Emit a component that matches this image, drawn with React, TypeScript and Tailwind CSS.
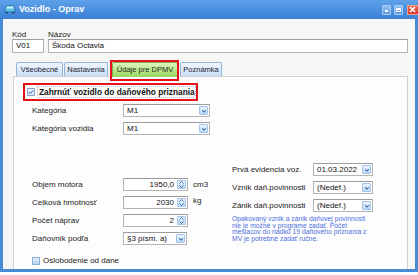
import React from 'react'

const font = "font-['Liberation_Sans',Arial,sans-serif]"

function Chevron() {
  return (
    <svg viewBox="0 0 8 8" className="w-[6px] h-[6px]">
      <path d="M1.5 3 L4 5.5 L6.5 3" fill="none" stroke="#2d5f9e" strokeWidth="1.4" />
    </svg>
  )
}

function DropBtn() {
  return (
    <span className="absolute right-px top-px bottom-px w-[9px] flex items-center justify-center rounded-[1px] border border-[#a3c4ea] bg-gradient-to-b from-[#eef5fe] to-[#bcd8f7]">
      <Chevron />
    </span>
  )
}

function Combo({ value, className }: { value: string; className: string }) {
  return (
    <div className={`relative h-[13px] ${className} bg-white border border-[#b4b4b4] border-t-[#9c9c9c] flex items-center pl-[3px] text-[8px] text-[#111]`}>
      {value}
      <DropBtn />
    </div>
  )
}

function Spin({ value }: { value: string }) {
  return (
    <div className="relative h-[13px] w-[65px] bg-white border border-[#b4b4b4] border-t-[#9c9c9c] flex items-center justify-end pr-[13px] text-[8px] text-[#111]">
      {value}
      <span className="absolute right-px top-px bottom-px w-[9px] flex flex-col items-center justify-center gap-[1px] rounded-[1px] border border-[#a3c4ea] bg-gradient-to-b from-[#eef5fe] to-[#bcd8f7]">
        <svg viewBox="0 0 6 3" className="w-[5px] h-[3px]">
          <path d="M0.5 2.8 L3 0.3 L5.5 2.8" fill="none" stroke="#2d5f9e" strokeWidth="1" />
        </svg>
        <svg viewBox="0 0 6 3" className="w-[5px] h-[3px]">
          <path d="M0.5 0.2 L3 2.7 L5.5 0.2" fill="none" stroke="#2d5f9e" strokeWidth="1" />
        </svg>
      </span>
    </div>
  )
}

function Row({ label, lw, children }: { label: string; lw: string; children: React.ReactNode }) {
  return (
    <div className="flex items-center h-[13px] text-[8px] text-[#222]">
      <span className={`${lw} shrink-0 whitespace-nowrap`}>{label}</span>
      {children}
    </div>
  )
}

const tabs = [
  { label: 'Všeobecné', cls: 'w-[47px]' },
  { label: 'Nastavenia', cls: 'w-[44px] ml-[1px]' },
  { label: 'Údaje pre DPMV', cls: 'w-[66px] ml-[4px]', active: true },
  { label: 'Poznámka', cls: 'w-[42px] ml-[2px]' },
]

export default function App() {
  return (
    <div className={`w-[418px] h-[275px] bg-white overflow-hidden ${font}`}>
      <div className="h-[272px] flex flex-col bg-[#4a8bd7] px-[3px] pb-[3px]">
        {/* title bar */}
        <div className="-mx-[3px] h-[19px] shrink-0 flex items-center bg-gradient-to-b from-[#5ea1ea] to-[#3b80d6] pl-[4px]">
          <svg viewBox="0 0 12 9" className="w-[12px] h-[9px]">
            <path d="M1 4 L2.5 1.2 Q2.8 0.6 3.5 0.6 L8.5 0.6 Q9.2 0.6 9.5 1.2 L11 4 L11 7 L1 7 Z" fill="#5cc3e6" stroke="#1f6a9c" strokeWidth="0.8" />
            <path d="M3 1.6 L9 1.6 L10 3.6 L2 3.6 Z" fill="#c9f0fb" />
            <rect x="1.6" y="6.6" width="2.2" height="2" fill="#1f4d70" />
            <rect x="8.2" y="6.6" width="2.2" height="2" fill="#1f4d70" />
          </svg>
          <span className="ml-[3px] text-[9px] font-bold text-white">Vozidlo - Oprav</span>
          <div className="ml-auto flex items-center h-[10px]">
            <span className="w-[9px] h-[10px] rounded-[1px] border border-[#a9cdf4] bg-gradient-to-b from-[#8fc0f2] to-[#5b9ae3] flex items-end justify-center pb-[2px]">
              <span className="w-[3px] h-[1.5px] bg-white" />
            </span>
            <span className="ml-[3px] w-[9px] h-[10px] rounded-[1px] border border-[#a9cdf4] bg-gradient-to-b from-[#8fc0f2] to-[#5b9ae3] flex items-center justify-center">
              <span className="w-[5px] h-[4px] border border-white border-t-2" />
            </span>
            <span className="ml-[4px] w-[11px] h-[10px] rounded-l-[1px] border border-r-0 border-[#f0a090] bg-gradient-to-b from-[#f06a55] to-[#d8382a] flex items-center pl-[1px]">
              <svg viewBox="0 0 7 7" className="w-[7px] h-[7px]">
                <path d="M1 1 L6 6 M6 1 L1 6" stroke="white" strokeWidth="1.6" />
              </svg>
            </span>
          </div>
        </div>

        {/* client */}
        <div className="flex-1 flex flex-col bg-[#f6f6f6] pl-[9px] pr-[7px] pt-[11px] text-[8px] text-[#222]">
          <div className="flex gap-[4px]">
            <div className="flex flex-col w-[32px]">
              <span className="h-[9px] leading-[9px]">Kód</span>
              <div className="h-[14px] bg-white border border-[#b4b4b4] border-t-[#9c9c9c] flex items-center pl-[3px] text-[#111]">V01</div>
            </div>
            <div className="flex flex-col flex-1">
              <span className="h-[9px] leading-[9px]">Názov</span>
              <div className="h-[14px] bg-white border border-[#b4b4b4] border-t-[#9c9c9c] flex items-center pl-[3px] text-[#111]">Škoda Octavia</div>
            </div>
          </div>

          {/* tabs */}
          <div className="mt-[9px] ml-[4px] flex items-end h-[14px] relative z-10">
            {tabs.map((t) =>
              t.active ? (
                <div key={t.label} className={`relative ${t.cls} h-[15px] -mb-px flex items-center justify-center rounded-t-[2px] border border-b-0 border-[#7fb04e] bg-gradient-to-b from-[#dcf7bc] to-[#96d85c] text-[7.5px] text-[#1c2a10]`}>
                  {t.label}
                  <span className="absolute -left-[3px] -right-[2px] -top-[3px] -bottom-[4px] border-2 border-[#e4131b]" />
                </div>
              ) : (
                <div key={t.label} className={`${t.cls} h-[14px] flex items-center justify-center rounded-t-[2px] border border-b-0 border-[#95b6dc] bg-gradient-to-b from-[#f0f6fe] to-[#c9def6] text-[7.5px] text-[#223]`}>
                  {t.label}
                </div>
              )
            )}
          </div>

          {/* panel */}
          <div className="ml-[1px] flex-1 flex flex-col bg-[#fdfdfd] border border-[#d2d2d2] border-b-0">
            <div className="mt-[6px] ml-[9px] w-[175px] h-[18px] border-2 border-[#e4131b] flex items-center pl-[2px]">
              <span className="w-[8px] h-[8px] border border-[#8aa9cf] bg-gradient-to-b from-[#eef5fe] to-[#d2e4f8] flex items-center justify-center">
                <svg viewBox="0 0 8 8" className="w-[6px] h-[6px]">
                  <path d="M1.2 4 L3.2 6 L6.8 1.8" fill="none" stroke="#2a5da8" strokeWidth="1.3" />
                </svg>
              </span>
              <span className="ml-[2px] flex-1 h-[12px] flex items-center bg-white border border-dotted border-[#b8b8b8] pl-[1px] text-[8.3px] font-bold text-[#111] whitespace-nowrap">
                Zahrnúť vozidlo do daňového priznania
              </span>
            </div>

            <div className="pl-[18px] flex flex-col">
              <div className="mt-[3px]">
                <Row label="Kategória" lw="w-[91px]">
                  <Combo value="M1" className="w-[87px]" />
                </Row>
              </div>
              <div className="mt-[5px]">
                <Row label="Kategória vozidla" lw="w-[91px]">
                  <Combo value="M1" className="w-[87px]" />
                </Row>
              </div>

              <div className="flex items-start mt-[28px]">
                <div className="w-[200px] pt-[15px] flex flex-col gap-[5px]">
                  <Row label="Objem motora" lw="w-[91px]">
                    <Spin value="1950,0" />
                    <span className="ml-[5px]">cm3</span>
                  </Row>
                  <Row label="Celková hmotnosť" lw="w-[91px]">
                    <Spin value="2030" />
                    <span className="ml-[5px] self-start -mt-[1px]">kg</span>
                  </Row>
                  <Row label="Počet náprav" lw="w-[91px]">
                    <Spin value="2" />
                  </Row>
                  <Row label="Daňovník podľa" lw="w-[91px]">
                    <Combo value="§3 písm. a)" className="w-[64px]" />
                  </Row>
                  <div className="mt-[6px] flex items-center h-[9px]">
                    <span className="w-[8px] h-[8px] border border-[#8fb0da] bg-gradient-to-b from-[#e3effc] to-[#b5d2f2]" />
                    <span className="ml-[3px]">Oslobodenie od dane</span>
                  </div>
                </div>

                <div className="flex flex-col gap-[5px]">
                  <Row label="Prvá evidencia voz." lw="w-[81px]">
                    <Combo value="01.03.2022" className="w-[60px]" />
                  </Row>
                  <Row label="Vznik daň.povinnosti" lw="w-[81px]">
                    <Combo value="(Nedef.)" className="w-[60px]" />
                  </Row>
                  <Row label="Zánik daň.povinnosti" lw="w-[81px]">
                    <Combo value="(Nedef.)" className="w-[60px]" />
                  </Row>
                  <p className="mt-[-1px] text-[6.8px] leading-[6.5px] text-[#4f6fe0] whitespace-nowrap">
                    Opakovaný vznik a zánik daňovej povinnosti
                    <br />
                    nie je možné v programe zadať. Počet
                    <br />
                    mesiacov do riadku 19 daňového priznania z
                    <br />
                    MV je potrebné zadať ručne.
                  </p>
                </div>
              </div>
            </div>
          </div>
        </div>
      </div>
    </div>
  )
}
